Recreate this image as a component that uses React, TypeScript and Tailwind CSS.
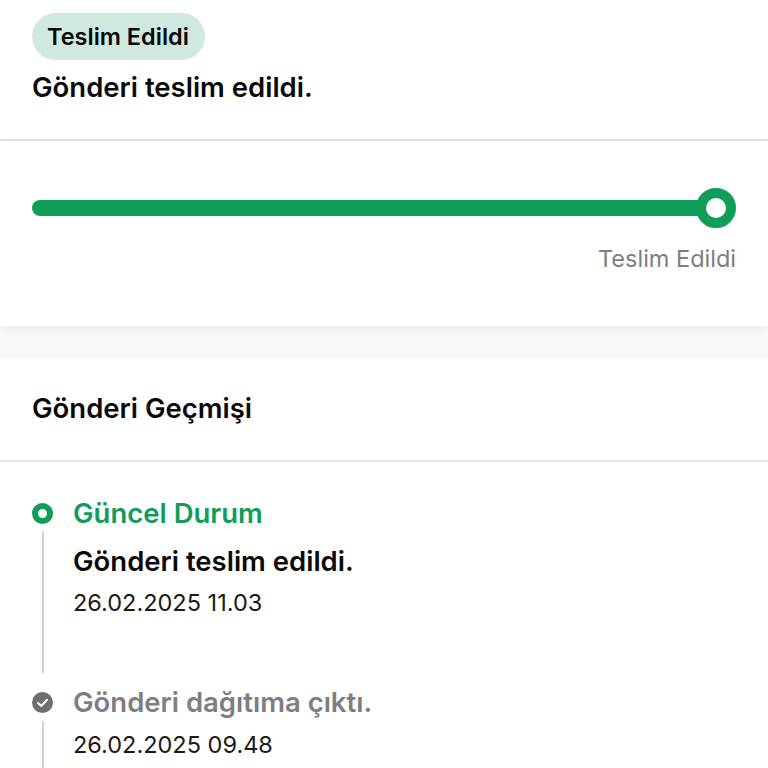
const font = "font-['Inter',sans-serif]";

function TimelineItem({
  dot,
  title,
  titleClass,
  subtitle,
  date,
  lineClass,
}: {
  dot: React.ReactNode;
  title: string;
  titleClass: string;
  subtitle?: string;
  date: string;
  lineClass: string;
}) {
  return (
    <div className="flex gap-[20px]">
      <div className="flex w-[21px] shrink-0 flex-col items-center">
        <div className="flex h-[30px] items-center">{dot}</div>
        <div className={`w-[2px] bg-[#d1d1d3] ${lineClass}`} />
      </div>
      <div className="min-w-0 flex-1">
        <div className={`text-[27.5px] font-semibold leading-[30px] ${titleClass}`}>{title}</div>
        {subtitle && (
          <div className="mt-[18px] text-[27.5px] font-semibold leading-[30px] text-[#0a0a0a]">{subtitle}</div>
        )}
        <div className={`${subtitle ? "mt-[12px]" : "mt-[13px]"} text-[23.5px] leading-[30px] text-[#1a1a1a]`}>{date}</div>
      </div>
    </div>
  );
}

export default function App() {
  return (
    <div className={`${font} h-[768px] w-[768px] overflow-hidden bg-white`}>
      {/* Status header */}
      <header className="h-[141px] border-b-2 border-[#e4e4e6] px-[32px] pt-[13px]">
        <span className="inline-flex h-[47px] items-center rounded-full bg-[#cfe9de] pl-[15px] pr-[16px] text-[23.5px] font-semibold text-[#0a0a0a]">
          Teslim Edildi
        </span>
        <p className="mt-[10px] text-[27.5px] font-semibold leading-[34px] text-[#0a0a0a]">Gönderi teslim edildi.</p>
      </header>

      {/* Progress */}
      <section className="relative z-10 h-[185px] bg-white px-[32px] pt-[47px] shadow-[0_3px_8px_rgba(0,0,0,0.06)]">
        <div className="flex items-center">
          <div className="-mr-[4px] h-[16px] flex-1 rounded-l-full bg-[#109d58]" />
          <div className="relative h-[40px] w-[40px] rounded-full border-[10px] border-[#109d58] bg-white" />
        </div>
        <p className="mt-[15px] text-right text-[23.5px] leading-[32px] text-[#7d7d82]">Teslim Edildi</p>
      </section>

      <div className="h-[32px] bg-[#f8f8f9]" />

      {/* History */}
      <section className="bg-white">
        <h2 className="flex h-[104px] items-center border-b-2 border-[#e4e4e6] px-[32px] text-[27.5px] font-semibold text-[#0a0a0a]">
          Gönderi Geçmişi
        </h2>
        <div className="px-[32px] pt-[36px]">
          <TimelineItem
            dot={<div className="h-[21px] w-[21px] rounded-full border-[6px] border-[#109d58] bg-white" />}
            title="Güncel Durum"
            titleClass="text-[#109d58]"
            subtitle="Gönderi teslim edildi."
            date="26.02.2025 11.03"
            lineClass="mt-[3px] h-[142px] mb-[14px]"
          />
          <TimelineItem
            dot={
              <svg width="21" height="21" viewBox="0 0 21 21">
                <circle cx="10.5" cy="10.5" r="10.5" fill="#6e6e73" />
                <path d="M6 11l3.2 3L15 7.8" fill="none" stroke="#fff" strokeWidth="2" strokeLinecap="round" strokeLinejoin="round" />
              </svg>
            }
            title="Gönderi dağıtıma çıktı."
            titleClass="text-[#7d7d82]"
            date="26.02.2025 09.48"
            lineClass="mt-[4px] h-[80px]"
          />
        </div>
      </section>
    </div>
  );
}
